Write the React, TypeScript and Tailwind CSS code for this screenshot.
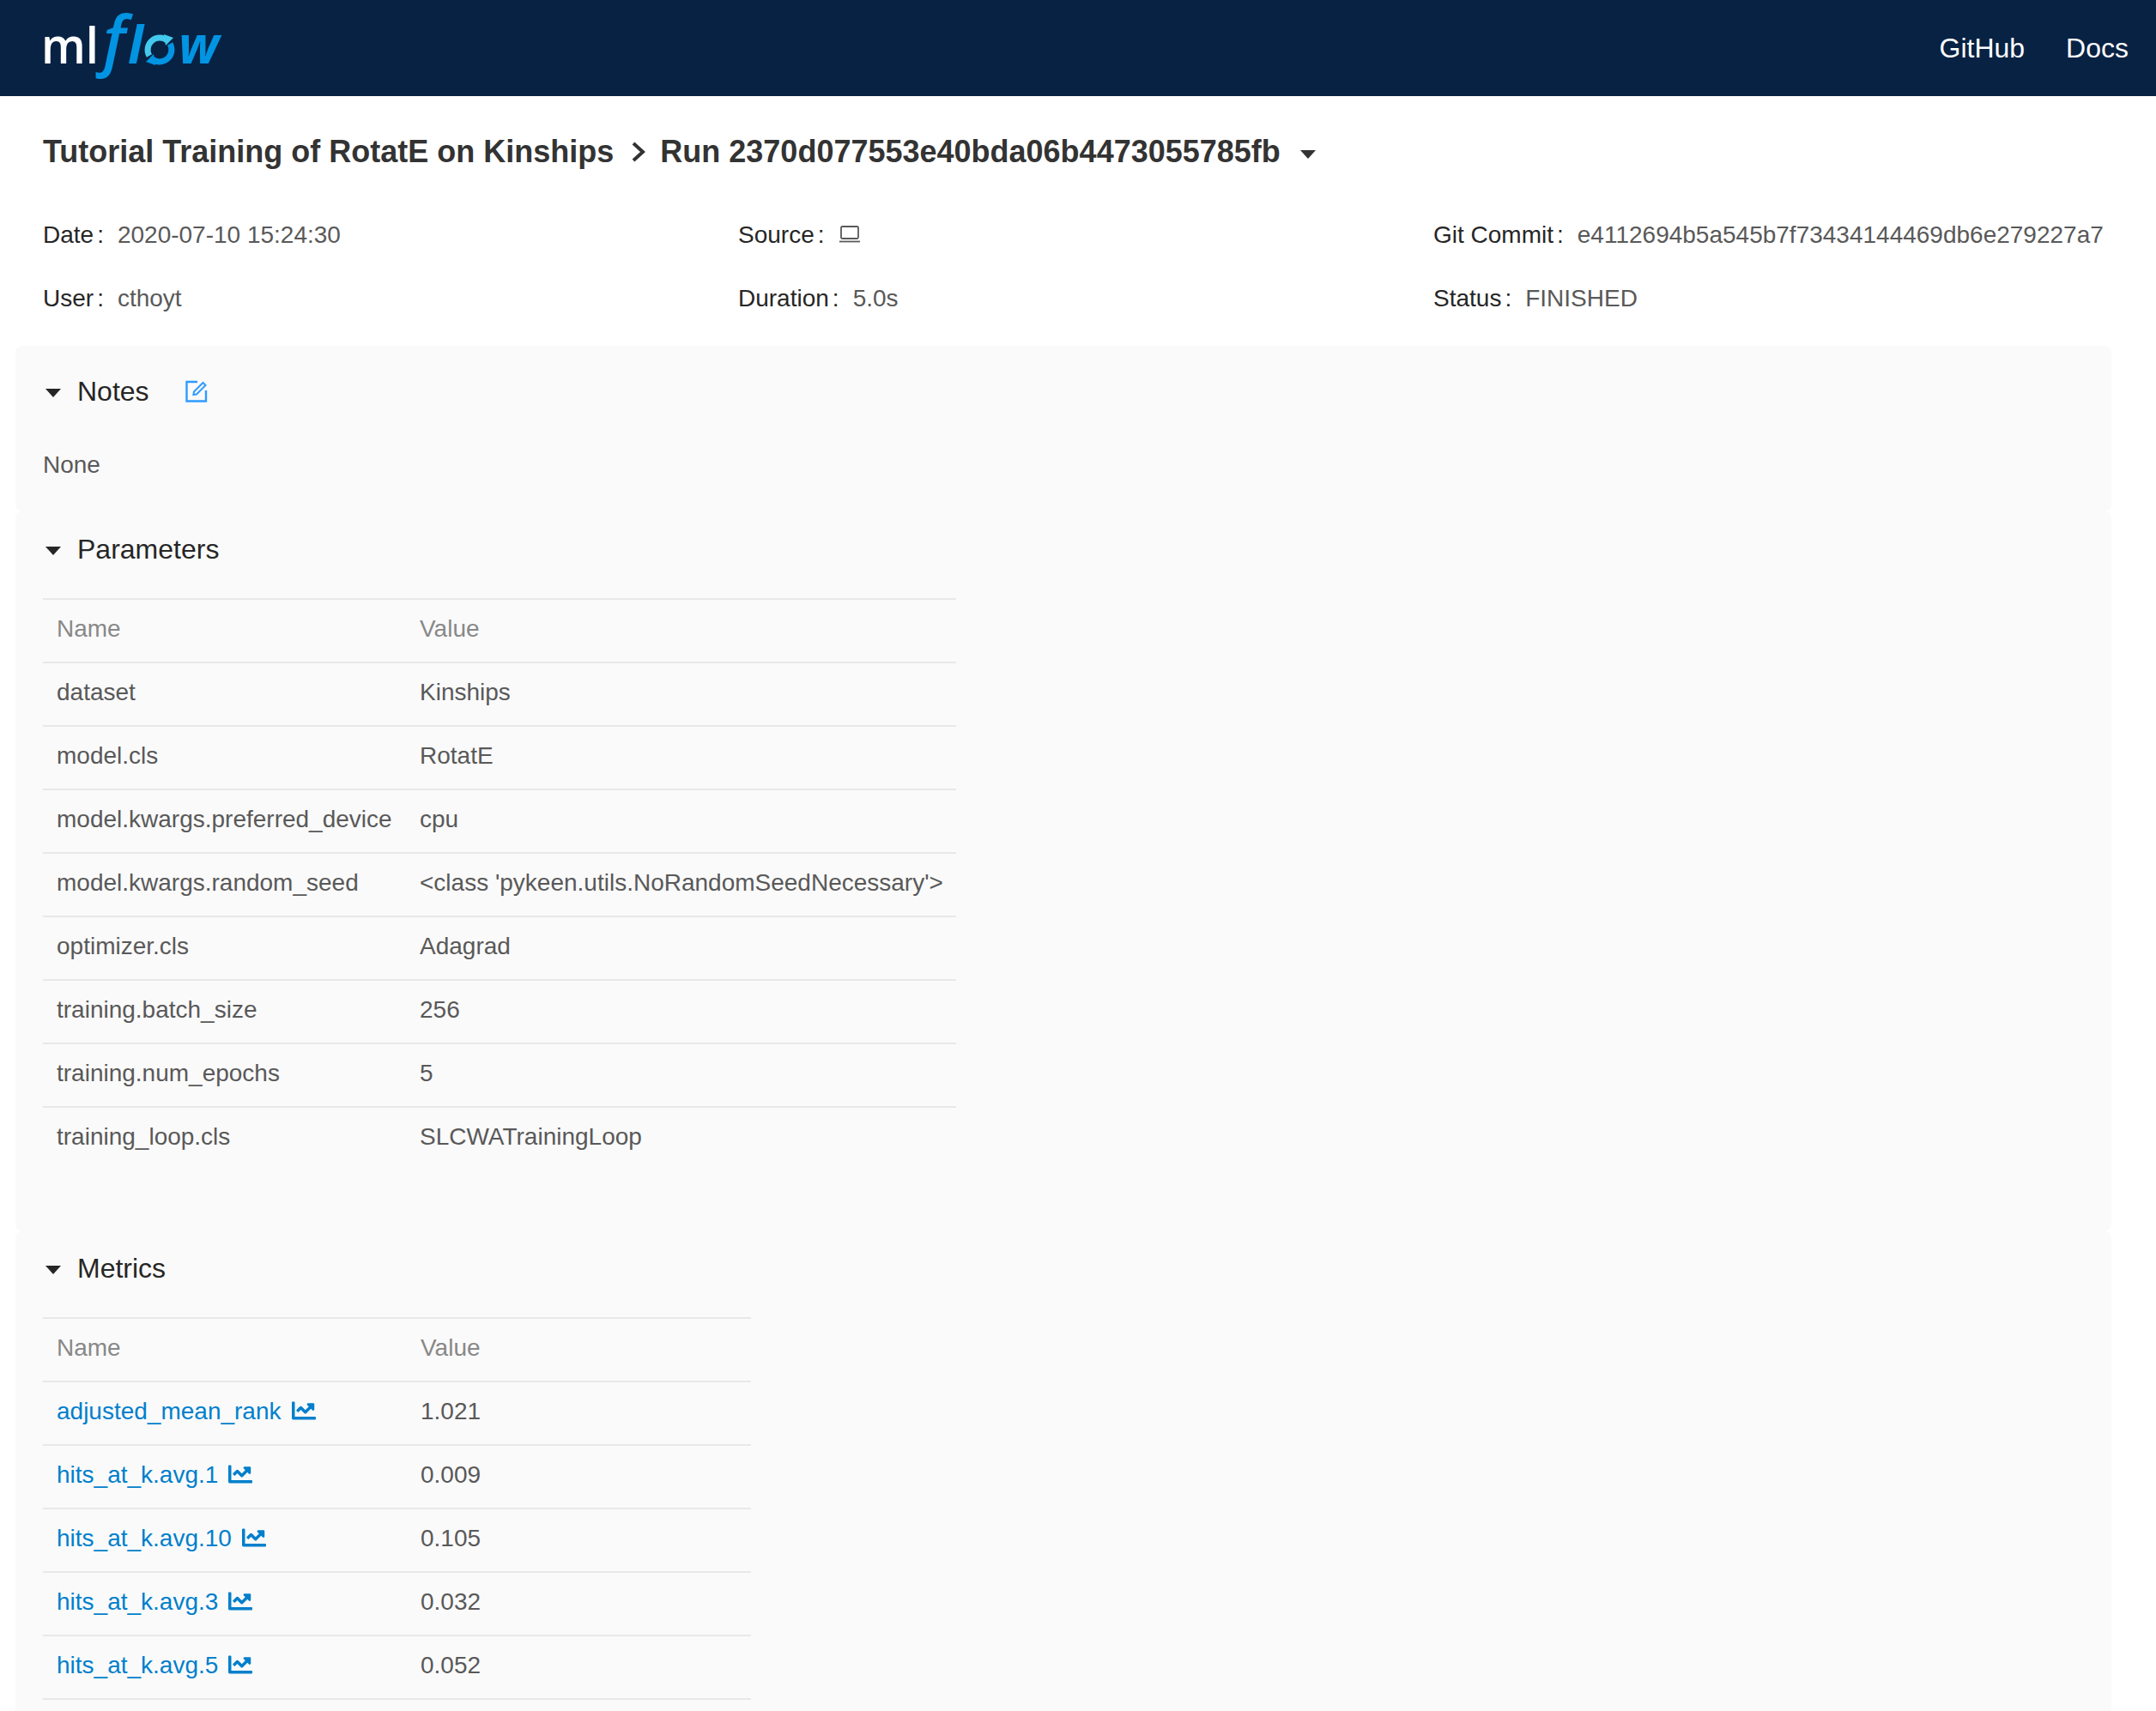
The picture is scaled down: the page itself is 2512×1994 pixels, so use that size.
import { FaChartLine } from "react-icons/fa";

const params = [
  ["dataset", "Kinships"],
  ["model.cls", "RotatE"],
  ["model.kwargs.preferred_device", "cpu"],
  ["model.kwargs.random_seed", "<class 'pykeen.utils.NoRandomSeedNecessary'>"],
  ["optimizer.cls", "Adagrad"],
  ["training.batch_size", "256"],
  ["training.num_epochs", "5"],
  ["training_loop.cls", "SLCWATrainingLoop"],
];

const metrics = [
  ["adjusted_mean_rank", "1.021"],
  ["hits_at_k.avg.1", "0.009"],
  ["hits_at_k.avg.10", "0.105"],
  ["hits_at_k.avg.3", "0.032"],
  ["hits_at_k.avg.5", "0.052"],
];

function Logo() {
  const font = "'Open Sans', sans-serif";
  return (
    <svg width="212" height="112" viewBox="0 0 212 112" className="block overflow-visible">
      <text x="-2" y="74" fontFamily={font} fontWeight="600" fontSize="58" textLength="67" lengthAdjust="spacingAndGlyphs" fill="#fff">ml</text>
      <text x="70" y="74" fontFamily={font} fontWeight="600" fontStyle="italic" fontSize="76" fill="#0194e2">f</text>
      <text x="99" y="74" fontFamily={font} fontWeight="700" fontStyle="italic" fontSize="60" fill="#0194e2">l</text>
      <text x="158" y="74" fontFamily={font} fontWeight="700" fontStyle="italic" fontSize="60" fill="#0194e2">w</text>
      {/* the o is two chasing arcs */}
      <path d="M123.9 65A14 14 0 0 1 145 47.3" fill="none" stroke="#43c9ed" strokeWidth="7" />
      <path d="M141 40l11 4-9 9z" fill="#43c9ed" />
      <path d="M148.1 51A14 14 0 0 1 127 68.7" fill="none" stroke="#0194e2" strokeWidth="7" />
      <path d="M131 76l-11-4 9-9z" fill="#0194e2" />
    </svg>
  );
}

function Caret() {
  return (
    <svg width="18" height="10" viewBox="0 0 18 10" className="shrink-0 mt-[4px]">
      <path d="M0 0h18L9 10z" fill="#262626" />
    </svg>
  );
}

function EditIcon() {
  return (
    <svg width="26" height="26" viewBox="0 0 26 26" fill="none" stroke="#2e9bff" strokeWidth="2.4">
      <path d="M14 2H1.5v22.5H24V12" />
      <path d="M10 13.5 20.5 3l3 3L13 16.5l-3.6.6z" strokeWidth="2" />
    </svg>
  );
}

function Section({ title, className, children }: { title: string; className: string; children: React.ReactNode }) {
  return (
    <section className={`bg-[#fafafa] rounded-lg pl-[32px] ${className}`}>
      <div className="flex items-center h-[40px] pl-[3px] text-[32px] text-[#262626]">
        <Caret />
        <span className="ml-[19px]">{title}</span>
        {title === "Notes" && (
          <span className="ml-[42px] flex">
            <EditIcon />
          </span>
        )}
      </div>
      {children}
    </section>
  );
}

function KeyValueTable({
  rows,
  width,
  nameWidth,
  link,
  lastBorder,
}: {
  rows: string[][];
  width: string;
  nameWidth: string;
  link?: boolean;
  lastBorder?: boolean;
}) {
  const cell = "px-[16px] pt-0 pb-[4px] border-t-2 border-[#e8e8e8] box-border align-middle font-normal text-left";
  return (
    <table className={`${width} table-fixed border-separate border-spacing-0 text-[28px] text-[#595959]`}>
      <thead>
        <tr className="text-[#888888]">
          <th className={`${cell} h-[74px] ${nameWidth}`}>Name</th>
          <th className={`${cell} h-[74px]`}>Value</th>
        </tr>
      </thead>
      <tbody>
        {rows.map(([name, value], i) => {
          const last = i === rows.length - 1 && lastBorder ? "border-b-2 h-[76px]" : "h-[74px]";
          return (
            <tr key={name}>
              <td className={`${cell} ${last} whitespace-nowrap`}>
                {link ? (
                  <a className="inline-flex items-center gap-[12px] text-[#017fcc]">
                    {name}
                    <FaChartLine className="text-[#017fcc] w-[28px] h-[28px] -mt-[2px]" />
                  </a>
                ) : (
                  name
                )}
              </td>
              <td className={`${cell} ${last} whitespace-nowrap`}>{value}</td>
            </tr>
          );
        })}
      </tbody>
    </table>
  );
}

function Meta({ label, children }: { label: string; children: React.ReactNode }) {
  return (
    <div className="flex items-center h-[74px] text-[28px] whitespace-nowrap">
      <span className="text-[#262626] mr-[16px]">
        {label}
        <span className="ml-[4px]">:</span>
      </span>
      <span className="text-[#595959]">{children}</span>
    </div>
  );
}

export default function App() {
  return (
    <div className="h-screen overflow-hidden bg-white font-['Liberation_Sans',Arial,sans-serif]">
      <header className="h-[112px] bg-[#082244] flex items-center justify-between pl-[50px] pr-[32px]">
        <Logo />
        <nav className="flex gap-[48px] text-[32px] text-white">
          <a>GitHub</a>
          <a>Docs</a>
        </nav>
      </header>

      <div className="pl-[50px] pt-[45px] flex items-center h-[85px] text-[36px] font-bold text-[#333333] whitespace-nowrap">
        <span>Tutorial Training of RotatE on Kinships</span>
        <svg width="16" height="24" viewBox="0 0 16 24" fill="none" stroke="#333" strokeWidth="4" className="ml-[21px] mr-[17px]">
          <path d="M2 2l11 10L2 22" />
        </svg>
        <span>Run 2370d077553e40bda06b4473055785fb</span>
        <svg width="18" height="10" viewBox="0 0 18 10" className="ml-[23px] mt-[6px]">
          <path d="M0 0h18L9 10z" fill="#333" />
        </svg>
      </div>

      <div className="grid grid-cols-[810px_810px_810px] pl-[50px] mt-[40px] mb-[18px]">
        <Meta label="Date">2020-07-10 15:24:30</Meta>
        <Meta label="Source">
          <svg width="26" height="22" viewBox="0 0 26 22" fill="none" stroke="#595959" strokeWidth="1.8" className="block -mt-[2px]">
            <rect x="3" y="2" width="20" height="14" rx="1.5" />
            <path d="M1 19.5h24" />
          </svg>
        </Meta>
        <Meta label="Git Commit">e4112694b5a545b7f73434144469db6e279227a7</Meta>
        <Meta label="User">cthoyt</Meta>
        <Meta label="Duration">5.0s</Meta>
        <Meta label="Status">FINISHED</Meta>
      </div>

      <div className="ml-[18px] w-[2442px]">
        <Section title="Notes" className="pt-[33px] h-[193px]">
          <p className="mt-[50px] text-[28px] leading-[32px] text-[#595959]">None</p>
        </Section>
        <Section title="Parameters" className="pt-[24px] h-[839px]">
          <div className="mt-[37px]">
            <KeyValueTable rows={params} width="w-[1064px]" nameWidth="w-[423px]" />
          </div>
        </Section>
        <Section title="Metrics" className="pt-[23px] h-[600px]">
          <div className="mt-[37px]">
            <KeyValueTable rows={metrics} width="w-[825px]" nameWidth="w-[424px]" link lastBorder />
          </div>
        </Section>
      </div>
    </div>
  );
}
